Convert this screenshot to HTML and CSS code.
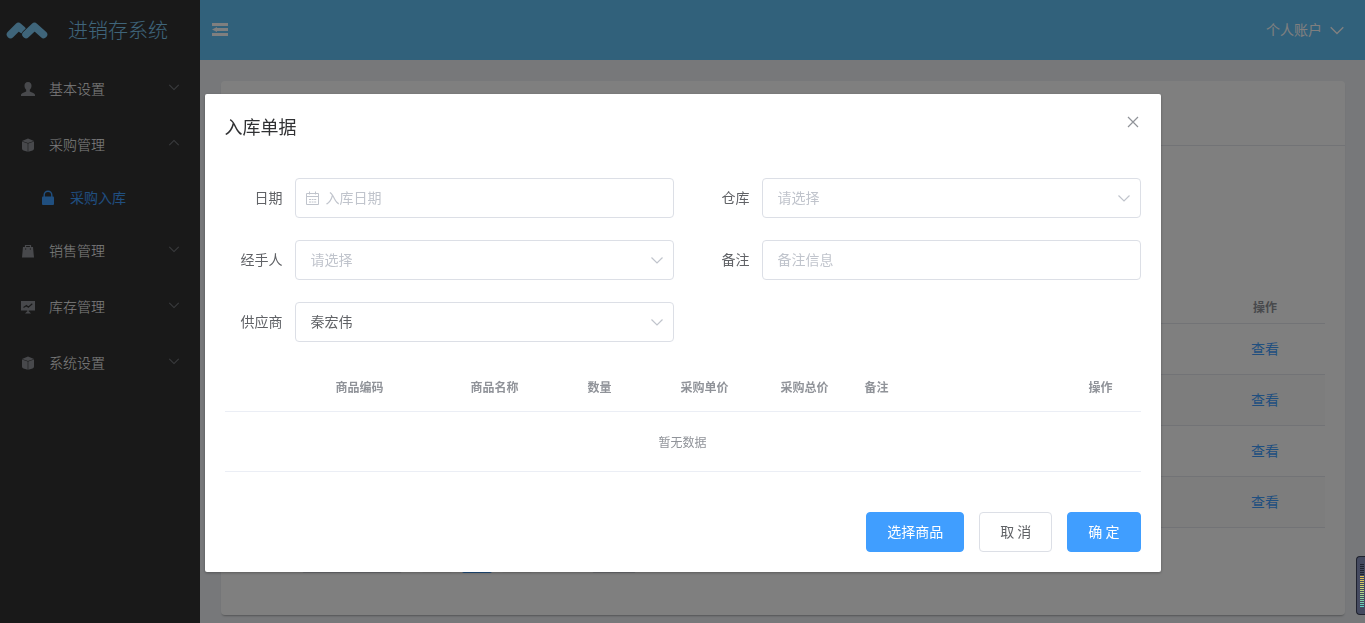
FILE: index.html
```html
<!DOCTYPE html>
<html lang="zh-CN">
<head>
<meta charset="utf-8">
<meta name="viewport" content="width=device-width, initial-scale=1">
<title>进销存系统</title>
<link rel="stylesheet" href="styles.css">
</head>
<body>
<svg class="sprite" aria-hidden="true">
  <symbol id="down" viewBox="0 0 14 14"><path d="M1.500 4.500 7 10l5.500-5.500" fill="none" stroke="currentColor" stroke-width="1.200"/></symbol>
  <symbol id="up" viewBox="0 0 14 14"><path d="M1.500 9.500 7 4l5.500 5.500" fill="none" stroke="currentColor" stroke-width="1.200"/></symbol>
  <symbol id="box" viewBox="0 0 16 16"><path d="M8 1.500 14 4 8 6 2 4zM2 4.600l5.700 2v8.200L3.500 13.600Q2 13 2 11.500zM14 4.600 8.300 6.600v8.200l4.200-1.200Q14 13 14 11.500z" fill="currentColor"/></symbol>
</svg>
<div class="app">
  <aside class="sidebar">
    <div class="brand">
      <svg class="brand-mark" viewBox="0 0 42 17" aria-hidden="true"><path d="M4.500 12.500 12.500 4.500 16 7.500" fill="none" stroke="currentColor" stroke-width="7.500" stroke-linecap="round" stroke-linejoin="round"/><path d="M20 12.500l8.500-8 9 8" fill="none" stroke="#333" stroke-width="9" stroke-linecap="round" stroke-linejoin="round"/><path d="M20 12.500l8.500-8 9 8" fill="none" stroke="currentColor" stroke-width="7.500" stroke-linecap="round" stroke-linejoin="round"/></svg>
      <span class="brand-name">进销存系统</span>
    </div>
    <nav>
      <button class="item" type="button"><svg class="icon" viewBox="0 0 16 16"><path d="M8 1c2.400 0 3.700 1.700 3.500 4-.1 1.700-.9 3-1.700 3.800v1.600c1 1 5.200 1 5.200 3.800v.8H1v-.8c0-2.800 4.200-2.800 5.200-3.800V8.800C5.400 8 4.600 6.700 4.500 5 4.300 2.700 5.600 1 8 1z" fill="currentColor"/></svg><span>基本设置</span><svg class="caret"><use href="#down"/></svg></button>
      <button class="item" type="button" aria-expanded="true"><svg class="icon"><use href="#box"/></svg><span>采购管理</span><svg class="caret"><use href="#up"/></svg></button>
      <a class="item sub" href="#"><svg class="icon" viewBox="0 0 16 16"><path d="M4.200 7V5a3.800 3.800 0 0 1 7.600 0v2" fill="none" stroke="currentColor" stroke-width="1.400"/><rect x="2" y="6.500" width="12" height="8.500" rx="1" fill="currentColor"/></svg><span>采购入库</span></a>
      <button class="item" type="button"><svg class="icon" viewBox="0 0 16 16"><path d="M5.500 5V2.500h5V5" fill="none" stroke="currentColor" stroke-width="1.200"/><path d="M3 4h10l1 10.500H2z" fill="currentColor"/><path d="M5 5.500h1.200v1H5zM9.800 5.500H11v1H9.800z" fill="#333"/></svg><span>销售管理</span><svg class="caret"><use href="#down"/></svg></button>
      <button class="item" type="button"><svg class="icon" viewBox="0 0 16 16"><path d="M1 2h14v9.500H1zM7.300 11h1.400v2H7.300zM5 14.500l2-2h2l2 2z" fill="currentColor"/><path d="m3.500 8.500 3-2 1.800 1.700 4-3.400" fill="none" stroke="#333" stroke-width="1.200"/></svg><span>库存管理</span><svg class="caret"><use href="#down"/></svg></button>
      <button class="item" type="button"><svg class="icon"><use href="#box"/></svg><span>系统设置</span><svg class="caret"><use href="#down"/></svg></button>
    </nav>
  </aside>
  <div class="page">
    <header class="topbar">
      <button class="fold" type="button" aria-label="收起菜单"><svg viewBox="0 0 16 14"><path d="M0 0h16v3H0zM5 5h11v3H5zM0 10h16v3H0zM0 6.500 5 4v5z" fill="currentColor"/></svg></button>
      <button class="account" type="button"><span>个人账户</span><svg><use href="#down"/></svg></button>
    </header>
    <main class="content">
      <section class="card">
        <div class="card-head"></div>
        <div class="card-body">
          <div class="filters"></div>
          <table class="list">
            <colgroup><col><col class="w120"></colgroup>
            <thead><tr><th></th><th>操作</th></tr></thead>
            <tbody>
              <tr><td></td><td><a href="#">查看</a></td></tr>
              <tr><td></td><td><a href="#">查看</a></td></tr>
              <tr><td></td><td><a href="#">查看</a></td></tr>
              <tr><td></td><td><a href="#">查看</a></td></tr>
            </tbody>
          </table>
          <div class="pager"><span class="size"></span><span class="step"></span><span class="step current"></span><span class="step"></span><span class="jump"></span></div>
        </div>
      </section>
    </main>
  </div>
</div>

<div class="mask">
  <form class="dialog" role="dialog" aria-labelledby="dialog-title">
    <header class="dialog-head">
      <h1 id="dialog-title">入库单据</h1>
      <button class="close" type="button" aria-label="关闭"><svg viewBox="0 0 16 16"><path d="m3 3 10 10M13 3 3 13" stroke="currentColor" stroke-width="1.200"/></svg></button>
    </header>
    <div class="dialog-body">
      <div class="fields">
        <div class="field"><label for="date">日期</label><div class="control has-prefix"><svg class="prefix" viewBox="0 0 14 14"><path d="M1.500 2.500h12v11h-12zM1.500 5.500h12M4.500 .5v3M10.500 .5v3M4 8.500h2m.7 0h1.800m.7 0h2M4 11h2m.7 0h1.800m.7 0h2" fill="none" stroke="currentColor"/></svg><input id="date" type="text" placeholder="入库日期"></div></div>
        <div class="field"><label for="store">仓库</label><div class="control"><select id="store" class="empty"><option>请选择</option></select><svg class="arrow"><use href="#down"/></svg></div></div>
        <div class="field"><label for="handler">经手人</label><div class="control"><select id="handler" class="empty"><option>请选择</option></select><svg class="arrow"><use href="#down"/></svg></div></div>
        <div class="field"><label for="note">备注</label><div class="control"><input id="note" type="text" placeholder="备注信息"></div></div>
        <div class="field"><label for="supplier">供应商</label><div class="control"><select id="supplier"><option>秦宏伟</option></select><svg class="arrow"><use href="#down"/></svg></div></div>
      </div>
      <table class="goods">
        <colgroup><col class="w50"><col class="w170"><col class="w100"><col class="w110"><col class="w100"><col class="w100"><col><col class="w80"></colgroup>
        <thead><tr><th></th><th>商品编码</th><th>商品名称</th><th>数量</th><th>采购单价</th><th>采购总价</th><th class="left">备注</th><th>操作</th></tr></thead>
        <tbody><tr><td colspan="8">暂无数据</td></tr></tbody>
      </table>
    </div>
    <footer class="dialog-foot">
      <button class="btn primary" type="button">选择商品</button>
      <button class="btn" type="button">取 消</button>
      <button class="btn primary" type="button">确 定</button>
    </footer>
  </form>
</div>
<div class="meter" aria-hidden="true"></div>
</body>
</html>
```
FILE: styles.css
```css
* { box-sizing: border-box; }
body {
  margin: 0;
  font: 400 14px/20px "Noto Sans CJK SC", sans-serif;
  color: #606266;
}
button, input, select { font: inherit; color: inherit; }
button { border: 0; background: none; padding: 0; cursor: pointer; }
a { color: #409eff; text-decoration: none; }
table { width: 100%; table-layout: fixed; border-collapse: separate; border-spacing: 0; }
.sprite { position: absolute; width: 0; height: 0; }

.app { display: flex; min-height: 100vh; }
.sidebar { flex: 0 0 200px; background: #333; color: #fff; }
.brand { display: flex; align-items: center; gap: 20px; height: 61px; padding-left: 6px; color: #7ecbf5; }
.brand-mark { width: 42px; height: 17px; }
.brand-name { padding-bottom: 2px; font-size: 20px; font-weight: 300; line-height: 28px; }
.item { display: flex; align-items: center; width: 100%; height: 56px; padding: 0 20px; gap: 13px; text-align: left; font-weight: 300; color: #fff; }
.item span, .account span { padding-bottom: 2px; }
.item .icon { width: 16px; height: 16px; color: #909399; }
.caret { width: 12px; height: 12px; margin: 0 0 4px auto; color: #74777c; }
.sub { height: 50px; padding-left: 40px; gap: 14px; font-weight: 400; color: #409eff; }
.sub .icon { color: #409eff; }

.page { flex: 1; min-width: 0; background: #eef0f4; }
.topbar { display: flex; align-items: center; justify-content: space-between; height: 60px; padding: 0 20px 0 12px; background: #62c2f6; color: #fff; }
.fold svg { display: block; width: 16px; height: 14px; }
.account { display: flex; align-items: center; gap: 7px; }
.account svg { width: 16px; height: 16px; }
.content { padding: 21px 20px 7px 21px; }
.card { background: #fff; border-radius: 4px; box-shadow: 0 2px 2px -1px rgba(0, 0, 0, .3); }
.card-head { height: 65px; border-bottom: 1px solid #e4e7ed; }
.card-body { padding: 20px 20px 42px; }
.filters { height: 124px; }
.list th, .list td { height: 51px; padding: 0 0 2px; border-bottom: 1px solid #e4e7ed; text-align: center; }
.list th { height: 34px; padding: 0; }
.list tbody tr:nth-child(even) td { background: #fafafa; }
.w120 { width: 120px; }
th { font-size: 12px; font-weight: 700; color: #909399; }
.pager { display: flex; gap: 10px; margin-top: 17px; padding-left: 61px; }
.pager span { height: 28px; border-radius: 2px; background: #f4f4f5; }
.pager .size { width: 100px; margin-right: 10px; border: 1px solid #dcdfe6; background: #fff; }
.pager .step { width: 30px; }
.pager .current { background: #409eff; }
.pager .jump { width: 44px; margin-left: 50px; border: 1px solid #dcdfe6; background: #fff; }

.mask { position: fixed; inset: 0; overflow: auto; background: rgba(0, 0, 0, .5); }
.dialog { width: round(up, 70vw, 1px); margin: round(up, 15vh, 1px) auto 50px; background: #fff; border-radius: 2px; box-shadow: 0 1px 3px rgba(0, 0, 0, .3); }
.dialog-head { display: flex; justify-content: space-between; align-items: flex-start; padding: 20px 20px 10px; }
.dialog-head h1 { margin: 0; font-size: 18px; line-height: 24px; font-weight: 400; color: #303133; }
.close { color: #909399; }
.close svg { display: block; width: 16px; height: 16px; }
.dialog-body { padding: 30px 20px; }
.fields { display: grid; grid-template-columns: 1fr 1fr; gap: 22px 18px; margin-bottom: 22px; }
.field { display: flex; align-items: center; }
.field label { flex: 0 0 70px; padding: 0 12px 2px 0; text-align: right; }
.control { position: relative; flex: 1; }
.control input, .control select {
  display: block;
  width: 100%;
  height: 40px;
  padding: 0 15px 2px;
  border: 1px solid #dcdfe6;
  border-radius: 4px;
  background: #fff;
  appearance: none;
}
.control .empty, .control ::placeholder { color: #c0c4cc; opacity: 1; }
.has-prefix input { padding-left: 30px; }
.prefix, .arrow { position: absolute; top: 13px; width: 14px; height: 14px; color: #c0c4cc; pointer-events: none; }
.prefix { left: 10px; }
.arrow { right: 10px; }

.goods th { height: 48px; padding: 0 0 2px; border-bottom: 1px solid #ebeef5; text-align: center; }
.goods .left { padding-left: 10px; text-align: left; }
.goods td { height: 60px; padding: 0; border-bottom: 1px solid #ebeef5; text-align: center; font-size: 12px; color: #909399; }
.w50 { width: 50px; }
.w80 { width: 80px; }
.w100 { width: 100px; }
.w110 { width: 110px; }
.w170 { width: 170px; }

.dialog-foot { display: flex; justify-content: flex-end; gap: 15px; padding: 10px 20px 20px; }
.btn { height: 40px; padding: 0 20px 2px; border: 1px solid #dcdfe6; border-radius: 4px; background: #fff; }
.primary { border-color: #409eff; background: #409eff; color: #fff; }

.meter { position: fixed; right: 0; bottom: 8px; width: 9px; height: 59px; padding: 6px 1px 6px 3px; border: 1px solid #1f222e; border-right: 0; border-radius: 4px 0 0 4px; background: #454a60; }
.meter::before {
  content: "";
  display: block;
  height: 100%;
  background:
    repeating-linear-gradient(#454a60 0 1px, transparent 1px 2px),
    linear-gradient(#20232e 0 12px, #e2b84e 12px, #c5d67a 26px, #54cfc8);
}
```
